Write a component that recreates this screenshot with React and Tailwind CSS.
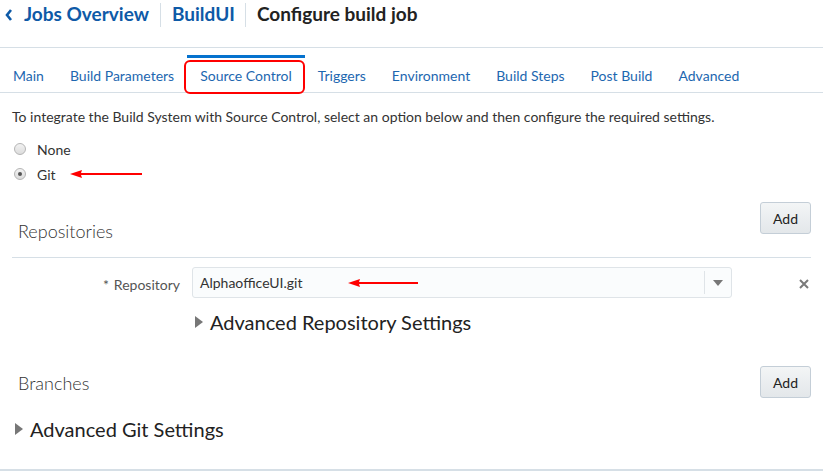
import React from "react";

const tabs = ["Main", "Build Parameters", "Source Control", "Triggers", "Environment", "Build Steps", "Post Build", "Advanced"];

function Triangle() {
  return (
    <svg width="8" height="12" viewBox="0 0 8 12" className="shrink-0">
      <path d="M0 0 L8 6 L0 12 Z" fill="#777" />
    </svg>
  );
}

function RedArrow({ width }) {
  return (
    <svg width={width} height="10" viewBox={`0 0 ${width} 10`}>
      <path d={`M0 5 L12 1 L11 4 L${width} 4 L${width} 6 L11 6 L12 9 Z`} fill="#f00" />
    </svg>
  );
}

function AddButton() {
  return (
    <button className="w-[51px] h-[32px] rounded-[3px] border border-[#c4ced7] bg-gradient-to-b from-[#f3f5f6] to-[#e3e7ea] text-[14px] text-[#222]">
      Add
    </button>
  );
}

export default function App() {
  return (
    <div className="w-[823px] h-[476px] bg-white relative overflow-hidden" style={{ fontFamily: "Lato, 'Noto Sans', sans-serif" }}>
      {/* header */}
      <div className="h-[48px] border-b border-[#d6dfe6] flex items-start pt-[2px]">
        <div className="flex items-center h-[25px]">
          <svg width="10" height="14" viewBox="0 0 10 14" className="ml-[4px] mr-[10px]">
            <path d="M7 2 L3 7 L7 12" stroke="#0e5aa7" strokeWidth="2.6" fill="none" />
          </svg>
          <span className="text-[19px] font-bold text-[#0e5aa7]">Jobs Overview</span>
          <div className="w-px h-[24px] bg-[#d6dfe6] ml-[11px] mr-[11px]" />
          <span className="text-[19px] font-bold text-[#0e5aa7]">BuildUI</span>
          <div className="w-px h-[24px] bg-[#d6dfe6] ml-[10px] mr-[11px]" />
          <span className="text-[19px] font-bold text-[#222]">Configure build job</span>
        </div>
      </div>

      {/* tabs */}
      <div className="h-[45px] border-b border-[#d6dfe6] pt-[7px] flex">
        {tabs.map((t) => (
          <div
            key={t}
            className={`px-[13px] h-full flex items-end pb-[6px] border-t-[3px] text-[14px] text-[#1d67b0] ${
              t === "Source Control" ? "border-[#0572ce]" : "border-transparent"
            }`}
          >
            {t}
          </div>
        ))}
      </div>

      <div className="px-[12px]">
        <p className="text-[14px] text-[#333] mt-[13px]">
          To integrate the Build System with Source Control, select an option below and then configure the required settings.
        </p>
        <div className="mt-[13px] flex flex-col gap-[7px]">
          <div className="flex items-center gap-[11px] pl-[2px] h-[18px]">
            <span className="w-[12px] h-[12px] rounded-full border border-[#b5b5b5] bg-gradient-to-b from-[#f2f2f2] to-[#dcdcdc]" />
            <span className="text-[14px] text-[#333]">None</span>
          </div>
          <div className="flex items-center gap-[11px] pl-[2px] h-[18px]">
            <span className="w-[12px] h-[12px] rounded-full border border-[#b5b5b5] bg-gradient-to-b from-[#f2f2f2] to-[#dcdcdc] flex items-center justify-center">
              <span className="w-[4px] h-[4px] rounded-full bg-[#555]" />
            </span>
            <span className="text-[14px] text-[#333]">Git</span>
            <span className="ml-[3px] flex"><RedArrow width={72} /></span>
          </div>
        </div>

        {/* Repositories */}
        <div className="mt-[19px] h-[56px] flex items-start justify-between border-b border-[#d6dfe6]">
          <span className="text-[18px] font-light text-[#333] pl-[6px] pt-[16px]">Repositories</span>
          <AddButton />
        </div>

        <div className="flex items-center mt-[9px]">
          <div className="w-[168px] text-right text-[14px] text-[#555] pt-[4px]">
            <span className="mr-[5px]">*</span>Repository
          </div>
          <div className="ml-[12px] w-[540px] h-[31px] rounded-[3px] border border-[#dfe4e8] bg-[#fafcfd] flex items-center">
            <span className="pl-[7px] text-[14px] text-[#333] w-[155px]">AlphaofficeUI.git</span>
            <RedArrow width={70} />
            <div className="flex-1" />
            <div className="w-px h-[23px] bg-[#dfe4e8]" />
            <svg width="26" height="8" viewBox="0 0 26 8">
              <path d="M8 1 L18 1 L13 7 Z" fill="#777" />
            </svg>
          </div>
          <div className="flex-1" />
          <svg width="12" height="12" viewBox="0 0 12 12" className="mr-[1px] mt-[2px]">
            <path d="M2 2 L10 10 M10 2 L2 10" stroke="#7a7a7a" strokeWidth="2" />
          </svg>
        </div>

        <div className="flex items-center gap-[7px] ml-[183px] mt-[9px]">
          <Triangle />
          <span className="text-[20px] text-[#222]">Advanced Repository Settings</span>
        </div>

        {/* Branches */}
        <div className="mt-[29px] flex items-center justify-between">
          <span className="text-[18px] font-light text-[#333] pl-[6px] pt-[3px]">Branches</span>
          <AddButton />
        </div>

        <div className="flex items-center gap-[7px] ml-[3px] mt-[16px]">
          <Triangle />
          <span className="text-[20px] text-[#222]">Advanced Git Settings</span>
        </div>
      </div>

      <div className="absolute left-0 right-0 top-[469px] h-[2px] bg-[#d6dfe6]" />

      {/* annotation box */}
      <div className="absolute left-[184px] top-[60px] w-[121px] h-[34px] border-[2px] border-[#f00] rounded-[6px]" />
    </div>
  );
}
